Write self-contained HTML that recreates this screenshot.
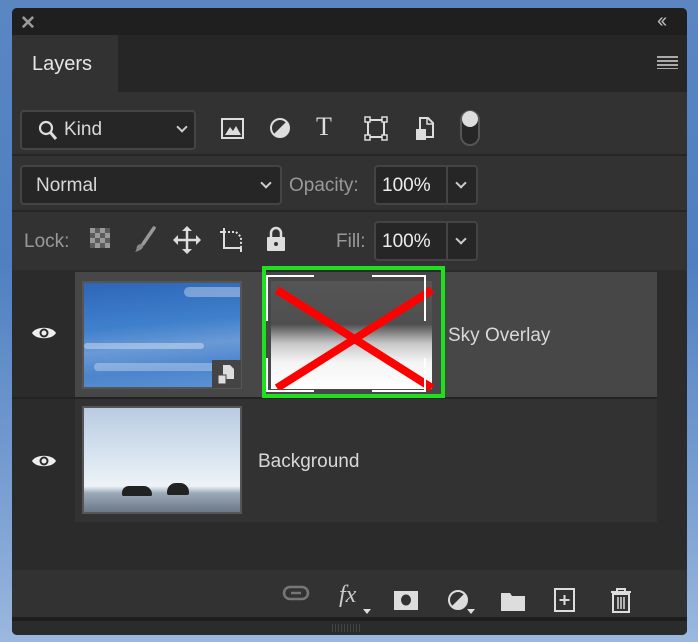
<!DOCTYPE html>
<html><head><style>
*{margin:0;padding:0;box-sizing:border-box}
body{width:698px;height:642px;overflow:hidden;background:linear-gradient(180deg,#5b86c2,#4f7fc0 40%,#7ea2d3 80%,#9bb8de);font-family:"Liberation Sans",sans-serif;position:relative}
.a{position:absolute}
.t{color:#d8d8d8;font-size:19px}
.box{position:absolute;border:2px solid #444;border-radius:4px;background:#262626}
.chev{position:absolute;width:8px;height:8px;border-right:2px solid #ccc;border-bottom:2px solid #ccc;transform:rotate(45deg)}
</style></head><body>
<div class="a" style="left:12px;top:8px;width:675px;height:627px;background:#2b2b2b;border-radius:5px;overflow:hidden">
 <div class="a" style="left:0;top:0;width:675px;height:27px;background:#1f1f1f"></div>
 <div class="a" style="left:8px;top:4px;color:#999;font-size:19px;font-weight:bold">✕</div>
 <div class="a" style="left:645px;top:2px;color:#bbb;font-size:20px;letter-spacing:-3px">‹‹</div>
 <div class="a" style="left:0;top:27px;width:675px;height:57px;background:#262626"></div>
 <div class="a" style="left:0;top:27px;width:106px;height:57px;background:#323232"></div>
 <div class="a t" style="left:20px;top:45px;font-size:20px;color:#e6e6e6">Layers</div>
 <div class="a" style="left:645px;top:48px;width:21px;height:13px;background:repeating-linear-gradient(#aaa 0 2px,transparent 2px 4px)"></div>
 <div class="a" style="left:0;top:84px;width:675px;height:178px;background:#323232"></div>
 <div class="a" style="left:0;top:146px;width:675px;height:2px;background:#262626"></div>
 <div class="a" style="left:0;top:202px;width:675px;height:2px;background:#262626"></div>
 <div class="box" style="left:8px;top:102px;width:176px;height:40px"></div>
 <svg class="a" style="left:26px;top:112px" width="20" height="22"><circle cx="8" cy="8" r="6" fill="none" stroke="#ddd" stroke-width="2.2"/><path d="M12 12l6 7" stroke="#ddd" stroke-width="3"/></svg>
 <div class="a t" style="left:52px;top:111px">Kind</div>
 <div class="chev" style="left:166px;top:115px"></div>
 <svg class="a" style="left:208px;top:108px" width="26" height="28"><rect x="2" y="3" width="21" height="19" fill="none" stroke="#ddd" stroke-width="2"/><path d="M5 19l5-8 3 4 3-5 5 9z" fill="#ddd"/></svg>
 <svg class="a" style="left:256px;top:107px" width="24" height="26"><circle cx="12" cy="13" r="9" fill="none" stroke="#ddd" stroke-width="2"/><path d="M18.4 6.6A9 9 0 0 1 5.6 19.4z" fill="#ddd"/></svg>
 <div class="a" style="left:304px;top:104px;color:#ddd;font-size:26px;font-family:'Liberation Serif',serif">T</div>
 <svg class="a" style="left:352px;top:107px" width="26" height="28"><rect x="4" y="5" width="16" height="17" fill="none" stroke="#ddd" stroke-width="2"/><g fill="#2b2b2b" stroke="#ddd" stroke-width="1.5"><rect x="1" y="2" width="5" height="5"/><rect x="18" y="2" width="5" height="5"/><rect x="1" y="20" width="5" height="5"/><rect x="18" y="20" width="5" height="5"/></g></svg>
 <svg class="a" style="left:402px;top:106px" width="24" height="30"><path d="M6 4h8l5 5v14H6z" fill="none" stroke="#ddd" stroke-width="2"/><path d="M13 4v6h6" fill="none" stroke="#ddd" stroke-width="1.5"/><rect x="2" y="15" width="10" height="11" fill="#ddd"/></svg>
 <div class="a" style="left:448px;top:102px;width:20px;height:36px;border:2px solid #555;border-radius:10px;background:#262626"></div>
 <div class="a" style="left:450px;top:103px;width:16px;height:16px;border-radius:50%;background:#ddd"></div>
 <div class="box" style="left:8px;top:157px;width:262px;height:40px"></div>
 <div class="a t" style="left:24px;top:167px">Normal</div>
 <div class="chev" style="left:250px;top:171px"></div>
 <div class="a t" style="left:277px;top:167px;color:#999">Opacity:</div>
 <div class="box" style="left:362px;top:157px;width:104px;height:40px"></div>
 <div class="a" style="left:434px;top:159px;width:2px;height:36px;background:#444"></div>
 <div class="a t" style="left:370px;top:167px;color:#eee">100%</div>
 <div class="chev" style="left:445px;top:171px"></div>
 <div class="a t" style="left:12px;top:223px;color:#999">Lock:</div>
 <svg class="a" style="left:77px;top:219px" width="24" height="24"><rect x="1" y="1" width="20" height="20" fill="#5c5c5c"/><g fill="#999"><rect x="1" y="1" width="5" height="5"/><rect x="11" y="1" width="5" height="5"/><rect x="6" y="6" width="5" height="5"/><rect x="16" y="6" width="5" height="5"/><rect x="1" y="11" width="5" height="5"/><rect x="11" y="11" width="5" height="5"/><rect x="6" y="16" width="5" height="5"/><rect x="16" y="16" width="5" height="5"/></g></svg>
 <svg class="a" style="left:120px;top:218px" width="26" height="28"><path d="M22 2L11 18" stroke="#999" stroke-width="3.5" stroke-linecap="round"/><path d="M6 19c3-2 6-1 5 2s-5 4-8 5c2-2 1-5 3-7z" fill="#888"/></svg>
 <svg class="a" style="left:161px;top:218px" width="28" height="28"><path d="M14 2v24M2 14h24" stroke="#ddd" stroke-width="2.5"/><path d="M14 0l-5 5h10zM14 28l-5-5h10zM0 14l5-5v10zM28 14l-5-5v10z" fill="#ddd"/></svg>
 <svg class="a" style="left:206px;top:218px" width="28" height="28"><path d="M6 4v18h17" fill="none" stroke="#ddd" stroke-width="2"/><path d="M6 6h12l5 5v11" fill="none" stroke="#ddd" stroke-width="2" stroke-dasharray="2 2"/><path d="M2 6h4M23 22v4M6 2v2" stroke="#ddd" stroke-width="2"/></svg>
 <svg class="a" style="left:252px;top:217px" width="24" height="28"><path d="M7 12V8a5 5 0 0 1 10 0v4" fill="none" stroke="#ddd" stroke-width="2.5"/><rect x="3" y="12" width="18" height="14" rx="1" fill="#ddd"/><circle cx="12" cy="19" r="2" fill="#333"/></svg>
 <div class="a t" style="left:324px;top:223px;color:#999">Fill:</div>
 <div class="box" style="left:362px;top:213px;width:104px;height:40px"></div>
 <div class="a" style="left:434px;top:215px;width:2px;height:36px;background:#444"></div>
 <div class="a t" style="left:370px;top:223px;color:#eee">100%</div>
 <div class="chev" style="left:445px;top:227px"></div>
 <div class="a" style="left:0;top:262px;width:675px;height:300px;background:#2b2b2b"></div>
 <div class="a" style="left:63px;top:264px;width:582px;height:125px;background:#474747"></div>
 <div class="a" style="left:63px;top:391px;width:582px;height:123px;background:#323232"></div>
 <div class="a" style="left:0;top:389px;width:645px;height:2px;background:#232323"></div>
 <svg class="a" style="left:19px;top:316px" width="26" height="18"><path d="M1 9C5 2 21 2 25 9 21 16 5 16 1 9z" fill="#eee"/><circle cx="13" cy="9" r="4.5" fill="#2b2b2b"/><circle cx="13" cy="9" r="2.5" fill="#eee"/></svg>
 <svg class="a" style="left:19px;top:444px" width="26" height="18"><path d="M1 9C5 2 21 2 25 9 21 16 5 16 1 9z" fill="#eee"/><circle cx="13" cy="9" r="4.5" fill="#2b2b2b"/><circle cx="13" cy="9" r="2.5" fill="#eee"/></svg>
 <div class="a" style="left:70px;top:273px;width:160px;height:108px;border:2px solid #555;background:linear-gradient(175deg,#2e66b8,#3f80cc 40%,#6a9ad6 60%,#4b85cd 80%,#5c92d2);overflow:hidden">
  <div class="a" style="left:0;top:60px;width:120px;height:6px;background:rgba(255,255,255,.35);border-radius:3px"></div>
  <div class="a" style="left:10px;top:80px;width:140px;height:8px;background:rgba(255,255,255,.3);border-radius:4px"></div>
  <div class="a" style="left:100px;top:4px;width:60px;height:10px;background:rgba(255,255,255,.35);border-radius:5px"></div>
 </div>
 <div class="a" style="left:200px;top:352px;width:29px;height:28px;background:#444"></div>
 <svg class="a" style="left:205px;top:356px" width="20" height="22"><path d="M6 1h7l4 4v10H6z" fill="#ddd"/><rect x="1" y="11" width="8" height="9" fill="#ddd" stroke="#444" stroke-width="1"/></svg>
 <div class="a" style="left:70px;top:398px;width:160px;height:108px;border:2px solid #555;background:linear-gradient(180deg,#b9cbe2,#dbe6f1 50%,#eef3f8 75%,#9aa9b8 82%,#6b7886)"></div>
 <div class="a" style="left:110px;top:478px;width:30px;height:10px;background:#222;border-radius:8px 10px 2px 2px"></div>
 <div class="a" style="left:155px;top:475px;width:22px;height:12px;background:#222;border-radius:9px 9px 2px 2px"></div>
 <div class="a" style="left:250px;top:258px;width:183px;height:132px;border:4px solid #1ee01e"></div>
 <div class="a" style="left:259px;top:273px;width:161px;height:108px;background:linear-gradient(180deg,#555 0,#4f4f4f 40%,#c8c8c8 58%,#f4f4f4 75%,#fff)"></div>
 <svg class="a" style="left:250px;top:258px" width="183" height="132"><path d="M15 24L170 122M170 24L15 122" stroke="#f00" stroke-width="8"/><g stroke="#fff" stroke-width="2" fill="none"><path d="M52 10H5v45M110 10H163v45M5 92v33h47M163 92v33H110"/></g></svg>
 <div class="a t" style="left:436px;top:317px">Sky Overlay</div>
 <div class="a t" style="left:246px;top:443px">Background</div>
 <div class="a" style="left:0;top:562px;width:675px;height:47px;background:#323232"></div>
 <div class="a" style="left:0;top:609px;width:675px;height:4px;background:#1e1e1e"></div>
 <div class="a" style="left:0;top:613px;width:675px;height:14px;background:#2b2b2b"></div>
 <div class="a" style="left:320px;top:616px;width:30px;height:8px;background:repeating-linear-gradient(90deg,#444 0 1px,transparent 1px 3px)"></div>
 <svg class="a" style="left:270px;top:575px" width="30" height="20"><rect x="2" y="4" width="24" height="12" rx="6" fill="none" stroke="#777" stroke-width="2.5"/><path d="M9 10h10" stroke="#777" stroke-width="2.5"/></svg>
 <div class="a" style="left:327px;top:574px;color:#ccc;font-size:24px;font-style:italic;font-family:'Liberation Serif',serif">fx</div>
 <div class="a" style="left:351px;top:601px;border:4px solid transparent;border-top:5px solid #ddd"></div>
 <svg class="a" style="left:381px;top:582px" width="26" height="22"><rect x="1" y="1" width="24" height="19" fill="#ddd"/><ellipse cx="13" cy="10" rx="5" ry="5.5" fill="#323232"/></svg>
 <svg class="a" style="left:435px;top:580px" width="24" height="26"><circle cx="11" cy="12" r="9" fill="none" stroke="#ddd" stroke-width="2"/><path d="M17.4 5.6A9 9 0 0 1 4.6 18.4z" fill="#ddd"/></svg>
 <div class="a" style="left:455px;top:601px;border:4px solid transparent;border-top:5px solid #ddd"></div>
 <svg class="a" style="left:488px;top:581px" width="28" height="24"><path d="M1 4h9l2 3h13v15H1z" fill="#ddd"/></svg>
 <svg class="a" style="left:541px;top:579px" width="24" height="26"><rect x="2" y="2" width="19" height="22" fill="none" stroke="#ddd" stroke-width="2"/><path d="M11.5 8v10M6.5 13h10" stroke="#ddd" stroke-width="2"/></svg>
 <svg class="a" style="left:597px;top:578px" width="24" height="28"><path d="M2 6h20M8 6V3h8v3" fill="none" stroke="#ddd" stroke-width="2"/><rect x="4" y="8" width="16" height="18" fill="none" stroke="#ddd" stroke-width="2"/><path d="M9 11v12M12 11v12M15 11v12" stroke="#ddd" stroke-width="1.5"/></svg>
</div>
</body></html>
